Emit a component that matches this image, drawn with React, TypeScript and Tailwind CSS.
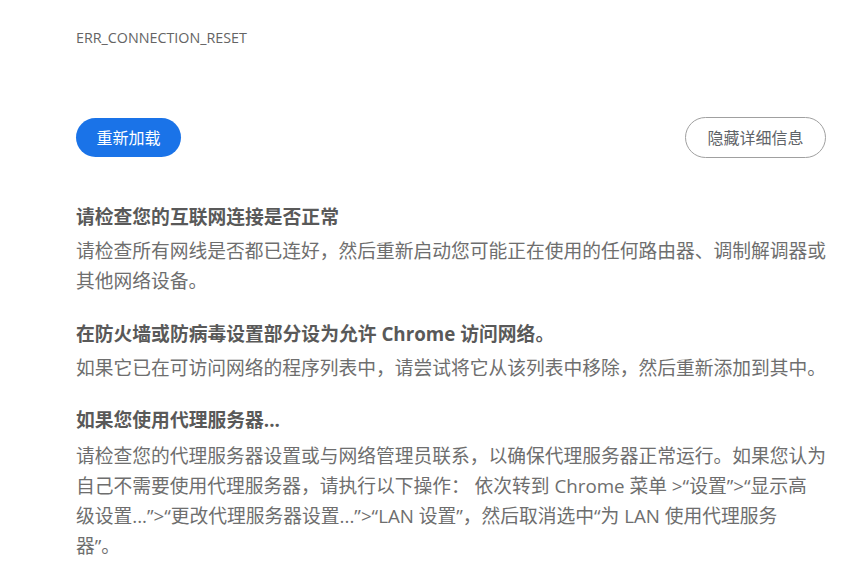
import React from "react";

const font = { fontFamily: '"Open Sans", "Noto Sans CJK SC", sans-serif' };

export default function App() {
  const tips = [
    {
      title: "请检查您的互联网连接是否正常",
      body: <>请检查所有网线是否都已连好，然后重新启动您可能正在使用的任何路由器、调制解调器或其他网络设备。</>,
      gap: "mt-[44px]",
      bodyGap: "mt-[4px]",
    },
    {
      title: "在防火墙或防病毒设置部分设为允许 Chrome 访问网络。",
      body: <>如果它已在可访问网络的程序列表中，请尝试将它从该列表中移除，然后重新添加到其中。</>,
      gap: "mt-[23px]",
      bodyGap: "mt-[4px]",
    },
    {
      title: "如果您使用代理服务器...",
      body: (
        <>
          请检查您的代理服务器设置或与网络管理员联系，以确保代理服务器正常运行。如果您认为自己不需要使用代理服务器，请执行以下操作： 依次转到 Chrome 菜单 &gt;“设置”&gt;“显示高
          <br />
          级设置...”&gt;“更改代理服务器设置...”&gt;“LAN 设置”，然后取消选中“为 LAN 使用代理服务
          <br />
          器”。
        </>
      ),
      gap: "mt-[22px]",
      bodyGap: "mt-[6px]",
    },
  ];

  return (
    <div className="min-h-screen bg-white" style={font}>
      <div className="w-[752px] ml-[76px] pt-[30px]">
        {/* Error code */}
        <div className="text-[14.3px] leading-[16px] text-[#646464]">ERR_CONNECTION_RESET</div>

        {/* Actions */}
        <div className="mt-[71px] flex items-center justify-between">
          <button className="h-[39px] w-[105px] rounded-full bg-[#1a73e8] text-[16px] text-white">
            重新加载
          </button>
          <button className="mr-[2px] h-[41px] w-[141px] rounded-full border border-[#a0a0a0] bg-white text-[16px] text-[#5f6368]">
            隐藏详细信息
          </button>
        </div>

        {/* Suggestions */}
        {tips.map((tip, idx) => (
          <div key={idx} className={tip.gap}>
            <h2 className="text-[18.8px] font-bold leading-[30px] text-[#595959]">{tip.title}</h2>
            <p className={`${tip.bodyGap} text-[18.75px] leading-[30px] text-[#6e6e6e]`}>{tip.body}</p>
          </div>
        ))}
      </div>
    </div>
  );
}
